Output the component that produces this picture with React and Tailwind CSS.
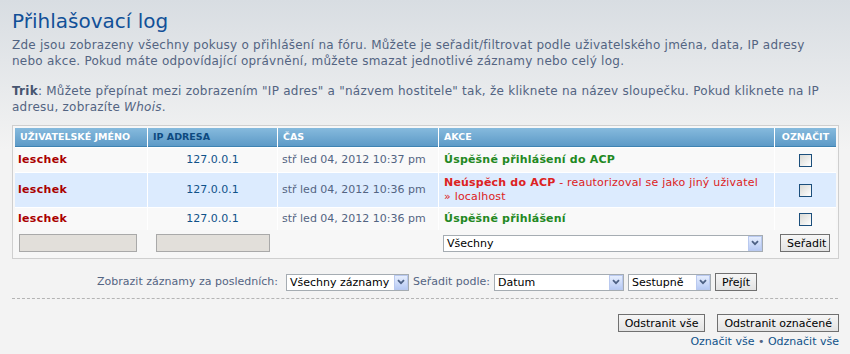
import React from 'react'

const font = "font-['DejaVu_Sans',Verdana,sans-serif]"

function Arrow() {
  return (
    <span className="flex h-[15px] w-[14px] shrink-0 items-center justify-center border border-[#b9c9ef] bg-[linear-gradient(#e6eefe,#b7caf4)]">
      <svg width="8" height="6" viewBox="0 0 8 6">
        <path d="M1 1.2 L4 4.2 L7 1.2" fill="none" stroke="#4d6185" strokeWidth="1.8" />
      </svg>
    </span>
  )
}

function Select({ value, width }) {
  return (
    <div
      className="flex h-[17px] items-center justify-between border border-[#a5acb2] bg-white pl-[3px] text-[11px] leading-none text-black"
      style={{ width }}
    >
      <span>{value}</span>
      <Arrow />
    </div>
  )
}

function Button({ children, className = '' }) {
  return (
    <button
      type="button"
      className={`h-[18px] border border-[#707070] bg-[linear-gradient(#f6f6f6,#e3e3e3)] px-[6px] text-[11px] leading-none text-black ${className}`}
    >
      {children}
    </button>
  )
}

function Check() {
  return <span className="block h-[13px] w-[13px] border border-[#1c4f7c] bg-[linear-gradient(135deg,#d9d9d4,#ffffff)]" />
}

const rows = [
  {
    time: 'stř led 04, 2012 10:37 pm',
    bg: 'bg-[#f9f9f9]',
    h: 'h-[24px]',
    action: <span className="font-bold text-[#228822]">Úspěšné přihlášení do ACP</span>,
  },
  {
    time: 'stř led 04, 2012 10:36 pm',
    bg: 'bg-[#dcebfe]',
    h: 'h-[34px]',
    action: (
      <span className="text-[#dd2222]">
        <b>Neúspěch do ACP</b> - reautorizoval se jako jiný uživatel
        <br />» localhost
      </span>
    ),
  },
  {
    time: 'stř led 04, 2012 10:36 pm',
    bg: 'bg-[#f9f9f9]',
    h: 'h-[22px]',
    action: <span className="font-bold text-[#228822]">Úspěšné přihlášení</span>,
  },
]

const cols = 'grid grid-cols-[132px_129px_160px_335px_61px] gap-x-px'

export default function App() {
  return (
    <div className={`${font} min-h-[354px] w-[850px] bg-[linear-gradient(to_bottom,#d8dde2,#f3f3f3_150px)] px-3 pt-[9px] text-[11px] text-[#536482]`}>
      <h1 className="text-[20px] font-normal leading-[24px] text-[#115098]">Přihlašovací log</h1>
      <p className="mt-1 text-[12px] leading-4 tracking-[0.25px]">
        Zde jsou zobrazeny všechny pokusy o přihlášení na fóru. Můžete je seřadit/filtrovat podle uživatelského jména, data, IP adresy
        <br />
        nebo akce. Pokud máte odpovídající oprávnění, můžete smazat jednotlivé záznamy nebo celý log.
      </p>
      <p className="mt-[14px] text-[12px] leading-4 tracking-[0.25px]">
        <b className="text-[#475570]">Trik</b>: Můžete přepínat mezi zobrazením "IP adres" a "názvem hostitele" tak, že kliknete na název sloupečku. Pokud kliknete na IP
        <br />
        adresu, zobrazíte <i>Whois</i>.
      </p>

      <div className="mt-[10px] w-[827px] border border-[#cfcfcf] bg-[#f7f7f7] p-[2px]">
        <div className="flex flex-col gap-y-px bg-white">
          <div className={`${cols} text-[9.5px] font-bold uppercase leading-none`}>
            {['Uživatelské jméno', 'IP adresa', 'Čas', 'Akce', 'Označit'].map((t, i) => (
              <div
                key={t}
                className={`flex h-[19px] items-center border-b border-[#3f83b2] bg-[linear-gradient(#86badd,#5d9ac7)] px-[5px] ${i === 1 ? 'text-[#0d4a80]' : 'text-white'} ${i === 4 ? 'justify-center' : ''}`}
              >
                {t}
              </div>
            ))}
          </div>
          {rows.map((r, i) => (
            <div key={i} className={`${cols} leading-[14px]`}>
              <div className={`${r.bg} ${r.h} flex items-center pl-[3px] font-bold tracking-[0.3px] text-[#aa0000]`}>leschek</div>
              <div className={`${r.bg} ${r.h} flex items-center justify-center text-[#105289]`}>127.0.0.1</div>
              <div className={`${r.bg} ${r.h} flex items-center pl-[4px]`}>{r.time}</div>
              <div className={`${r.bg} ${r.h} flex items-center pl-[5px] tracking-[0.2px]`}>{r.action}</div>
              <div className={`${r.bg} ${r.h} flex items-center justify-center`}>
                <Check />
              </div>
            </div>
          ))}
        </div>
        <div className={`${cols} h-[26px] items-center`}>
          <div className="pl-[4px]">
            <div className="h-[18px] w-[118px] border border-[#a9a9a9] bg-[#e2dfda]" />
          </div>
          <div className="pl-[8px]">
            <div className="h-[18px] w-[114px] border border-[#a9a9a9] bg-[#e2dfda]" />
          </div>
          <div />
          <div className="pl-[4px]">
            <Select value="Všechny" width={320} />
          </div>
          <div className="pl-[5px]">
            <Button className="w-[50px] px-0">Seřadit</Button>
          </div>
        </div>
      </div>

      <div className="mt-[14px] flex items-center justify-center gap-[4px] pl-[4px]">
        <span className="mr-[4px]">Zobrazit záznamy za posledních:</span>
        <Select value="Všechny záznamy" width={123} />
        <span>Seřadit podle:</span>
        <Select value="Datum" width={130} />
        <Select value="Sestupně" width={83} />
        <Button>Přejít</Button>
      </div>
      <div className="mt-[7px] w-[826px] border-t border-dashed border-[#b4b4b4]" />

      <div className="mt-[15px] flex w-[827px] justify-end gap-[12px]">
        <Button>Odstranit vše</Button>
        <Button>Odstranit označené</Button>
      </div>
      <div className="mt-[2px] w-[827px] text-right text-[#105289]">
        Označit vše <span className="text-[#536482]">•</span> Odznačit vše
      </div>
    </div>
  )
}
